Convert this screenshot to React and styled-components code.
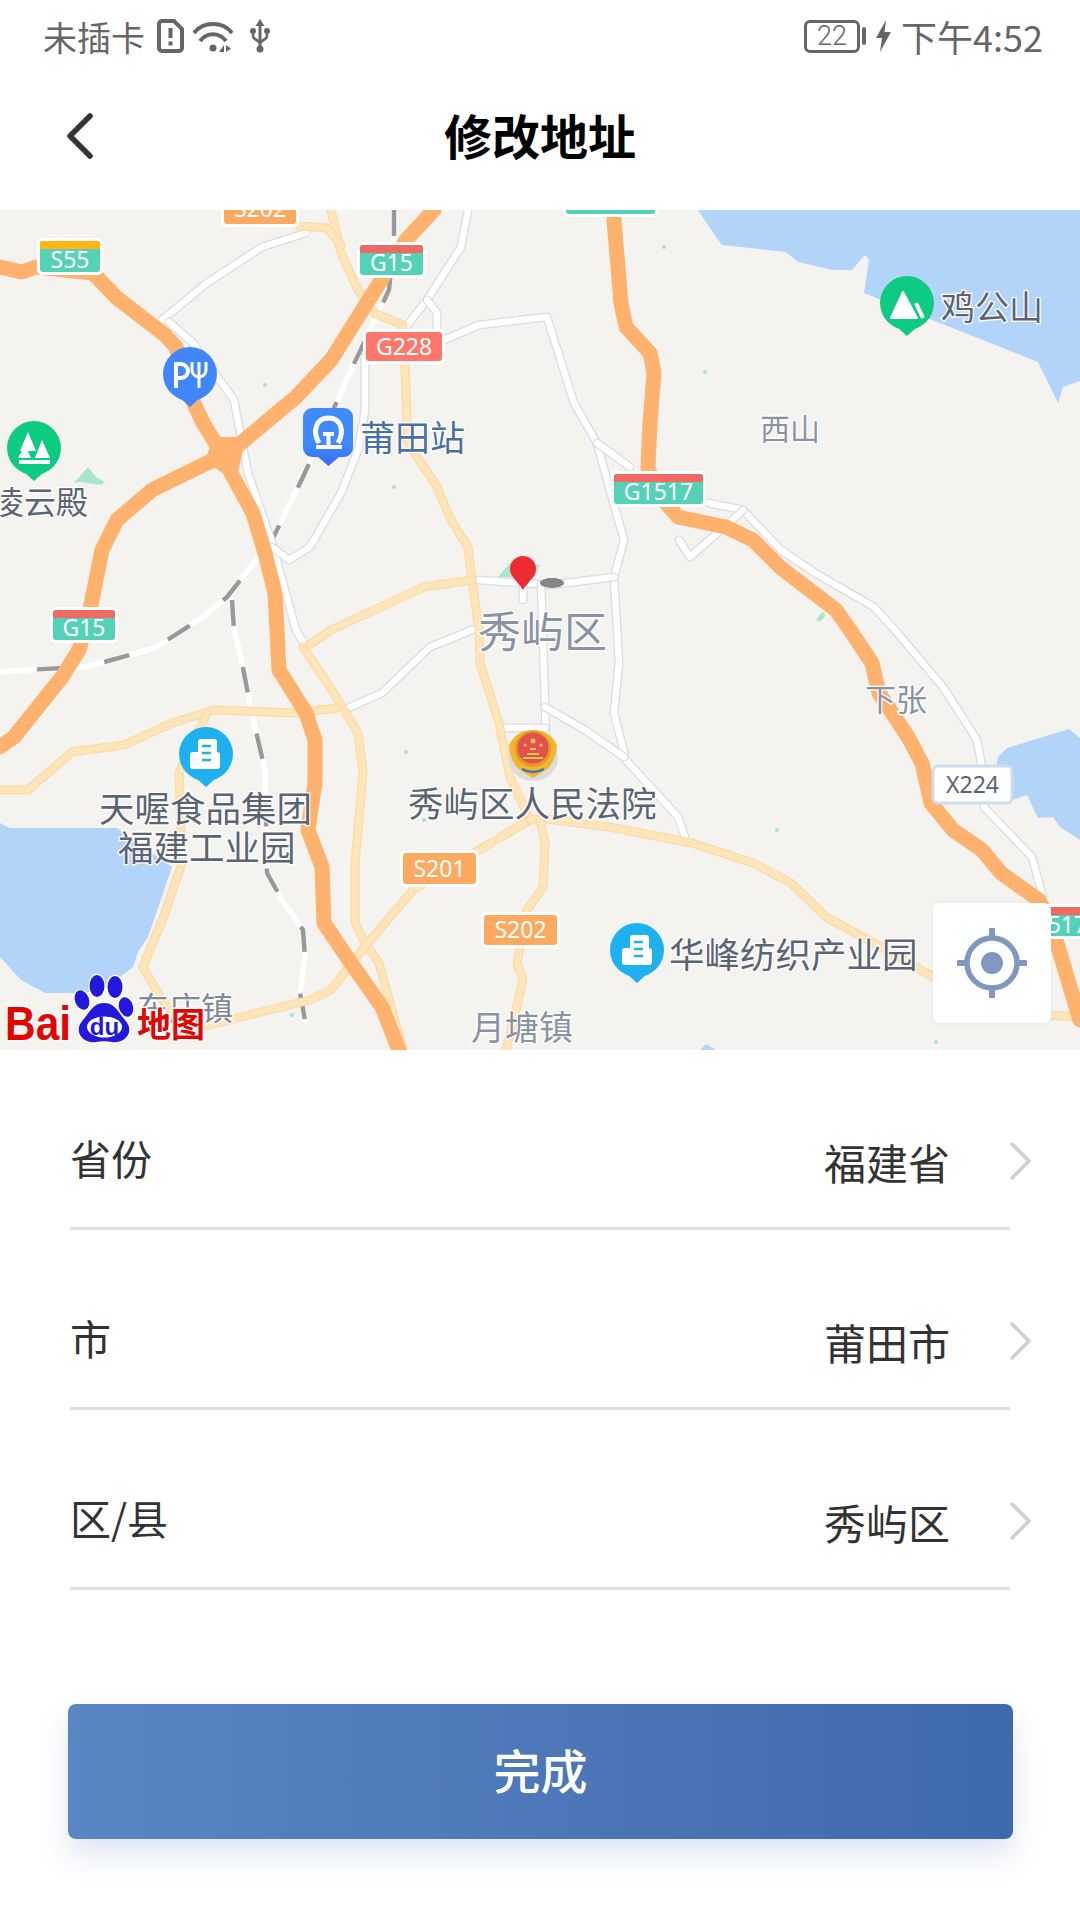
import React from 'react'
import styled, { createGlobalStyle } from 'styled-components'

const CJK = `"Noto Sans CJK SC", "Noto Sans", sans-serif`

const ORANGE_ROADS = [
  '0,267 22,272 36,267 93,273 117,298 165,335 176,347 191,397 203,423 220,450 224,456',
  '224,456 241,443 296,397 331,360 375,290 406,240 434,210',
  '224,456 207,463 152,490 117,520 102,550 90,610 79,650 62,677 14,737 0,747',
  '224,456 231,473 253,513 265,553 275,593 277,630 279,670 306,713 315,740 315,783 308,830 322,867 324,923 351,963 382,1007 399,1050',
  '614,210 614,220 621,303 626,327 650,353 654,373 650,423 648,467 655,490 678,517 726,527 753,540 781,568 836,610 850,630 872,663 879,693 908,737 922,763 931,803 953,830 982,850 1001,873 1039,900 1053,930 1080,1020',
]

const YELLOW_ROADS = [
  '331,210 341,253 358,290 374,313 403,325 405,367 408,443 437,487 451,520 468,547 472,580 479,630 480,663 499,723 510,777 530,820',
  '300,226 327,228 341,245',
  '472,580 424,587 331,630 306,647',
  '303,647 330,687 358,733 363,773 355,863 355,923 365,943 379,963 403,1050',
  '0,790 28,790 72,752 124,745 172,723 214,710 296,713 337,708',
  '207,713 179,773 182,863 165,913 143,967 162,1000 190,1030 241,1017 310,1000 331,990 362,950 413,890 479,850 530,820',
  '530,820 540,818 609,827 692,843 753,863 791,883 826,917 881,947 933,977',
  '1045,1015 1080,1017',
  '540,820 545,843 543,887 527,910 517,963 523,980 513,1023 506,1050',
]

const MINOR_ROADS = [
  '162,320 207,283 262,247 306,233',
  '169,322 193,343 234,400 241,437 248,473 272,543 296,630 306,647',
  '272,547 289,560 310,547 341,493 358,450 365,410 365,357 406,327 427,300 461,247 468,210',
  '427,300 437,313 437,330',
  '444,340 479,325 547,317 574,403 597,443 609,487 624,540 614,577 619,663 614,713 626,760 678,817 686,840',
  '614,577 550,585 479,580',
  '597,443 630,467',
  '709,503 743,510 781,550 815,573 874,607 895,630 943,687 977,740 982,767 984,807 1032,857 1043,897',
  '743,510 730,522 690,557 679,540',
  '541,585 543,640 545,707 547,770',
  '523,580 523,600',
  '545,707 585,730 624,757',
  '348,708 382,693 430,647 472,630',
  '504,728 545,728',
]

const RAILWAYS = [
  '394,210 394,240 389,290 351,370 303,477 272,540 227,597 203,617 155,648 86,667 24,670 0,672',
  '232,600 234,630 241,657 251,710 265,770 267,873 282,900 303,930 305,957 300,993 305,1020',
]

const WATER = [
  '698,210 716,237 722,245 786,252 798,262 833,270 852,270 865,255 869,260 864,293 1038,362 1058,403 1063,387 1080,381 1080,210',
  '0,823 10,828 117,828 172,867 148,937 138,952 133,967 120,977 86,993 45,993 21,980 0,957',
  '998,757 1007,748 1069,729 1080,738 1080,840 1060,827 1053,817 1038,818 1027,795 1012,800 996,767',
  '700,1050 706,1044 716,1050',
]

const GREENERY = [
  '74,483 88,467 96,477 105,482 101,485 80,482',
  '498,577 510,563 520,562 540,565 535,577',
  '816,620 822,612 826,615 820,622',
]

const DOTS = [
  [265, 385], [394, 487], [664, 247], [705, 372], [406, 752], [424, 820], [292, 1015], [777, 830], [936, 1042],
]

const SHIELDS = [
  { x: 38, y: 239, w: 64, h: 35, band: '#ffb514', body: '#54d2b8', label: 'S55' },
  { x: 358, y: 243, w: 67, h: 34, band: '#ef6a62', body: '#54d2b8', label: 'G15' },
  { x: 51, y: 608, w: 66, h: 34, band: '#ef6a62', body: '#54d2b8', label: 'G15' },
  { x: 612, y: 472, w: 93, h: 34, band: '#ef6a62', body: '#54d2b8', label: 'G1517' },
  { x: 1006, y: 905, w: 93, h: 33, band: '#ef6a62', body: '#54d2b8', label: 'G1517' },
  { x: 564, y: 190, w: 93, h: 26, body: '#54d2b8' },
  { x: 222, y: 192, w: 76, h: 34, body: '#fdaa60', label: 'S202' },
  { x: 364, y: 330, w: 80, h: 33, body: '#ff766b', label: 'G228' },
  { x: 401, y: 851, w: 77, h: 35, body: '#fdaa60', label: 'S201' },
  { x: 482, y: 913, w: 77, h: 34, body: '#fdaa60', label: 'S202' },
]

const PLACES = [
  { x: 88, y: 503, size: 32, anchor: 'end', text: '凌云殿' },
  { x: 360, y: 438, size: 35, color: '#4a6fa5', text: '莆田站' },
  { x: 941, y: 308, size: 34, text: '鸡公山' },
  { x: 760, y: 430, size: 30, color: '#8a93a6', text: '西山' },
  { x: 478, y: 632, size: 43, color: '#8a92a5', text: '秀屿区' },
  { x: 865, y: 700, size: 31, color: '#8a93a6', text: '下张' },
  { x: 408, y: 804, size: 35.5, text: '秀屿区人民法院' },
  { x: 99, y: 809, size: 35.5, text: '天喔食品集团' },
  { x: 118, y: 848, size: 35.5, text: '福建工业园' },
  { x: 669, y: 955, size: 35.5, text: '华峰纺织产业园' },
  { x: 137, y: 1009, size: 32, color: '#7f8899', text: '东庄镇' },
  { x: 471, y: 1028, size: 34, color: '#8a93a6', text: '月塘镇' },
]

const FIELDS = [
  { label: '省份', value: '福建省' },
  { label: '市', value: '莆田市' },
  { label: '区/县', value: '秀屿区' },
]

const Road = ({ points, casing, fill, outer, inner }) => (
  <>
    <RoadLine points={points} stroke={casing} strokeWidth={outer} />
    <RoadLine points={points} stroke={fill} strokeWidth={inner} />
  </>
)

const Shield = ({ x, y, w, h, band, body, label }) => (
  <g>
    <rect x={x - 1} y={y - 1} width={w + 2} height={h + 2} rx="5" fill="#fff" />
    <rect x={x + 2} y={y + 2} width={w - 4} height={h - 4} rx="3" fill={body} />
    {band && <path d={`M${x + 2} ${y + 10} v-5 a3 3 0 0 1 3 -3 h${w - 10} a3 3 0 0 1 3 3 v5 z`} fill={band} />}
    {label && (
      <ShieldText x={x + w / 2} y={y + h / 2 + (band ? 2 : -1)}>
        {label}
      </ShieldText>
    )}
  </g>
)

const Pin = ({ cx, cy, color, children }) => (
  <g>
    <circle cx={cx} cy={cy} r="27" fill={color} />
    <path d={`M${cx - 10} ${cy + 24} L${cx} ${cy + 33} L${cx + 10} ${cy + 24} z`} fill={color} />
    {children}
  </g>
)

const Building = ({ x, y, color }) => (
  <g>
    <rect x={x + 8} y={y} width="19" height="20" rx="3" fill="#fff" />
    <rect x={x} y={y + 13} width="30" height="17" rx="3" fill="#fff" />
    <path d={`M${x + 12} ${y + 7} h9 M${x + 12} ${y + 14} h9 M${x + 12} ${y + 21} h9`} stroke={color} strokeWidth="2.5" />
  </g>
)

const MapDrawing = () => (
  <MapSvg viewBox="0 210 1080 840">
    <defs>
      <linearGradient id="stationBlue" x1="0" y1="0" x2="0" y2="1">
        <stop offset="0.6" stopColor="#3f8afc" />
        <stop offset="1" stopColor="#3a6cf0" />
      </linearGradient>
    </defs>
    <rect x="0" y="210" width="1080" height="840" fill="#f5f3f0" />
    {WATER.map(p => <polygon key={p} points={p} fill="#b3d4f9" />)}
    {GREENERY.map(p => <polygon key={p} points={p} fill="#abe5d0" />)}
    {DOTS.map(([x, y]) => <circle key={`${x}-${y}`} cx={x} cy={y} r="2" fill="#a5e0dc" />)}

    {RAILWAYS.map(p => (
      <g key={p}>
        <RoadLine points={p} stroke="#fff" strokeWidth="5.5" />
        <RailDash points={p} stroke="#999" strokeWidth="4.5" strokeDasharray="26 42" />
      </g>
    ))}
    {MINOR_ROADS.map(p => <Road key={p} points={p} casing="#d9dce5" fill="#fff" outer="9" inner="6.5" />)}
    {YELLOW_ROADS.map(p => <Road key={p} points={p} casing="#fdd9a6" fill="#ffe6ba" outer="9" inner="6.5" />)}
    {ORANGE_ROADS.map(p => <RoadLine key={p} points={p} stroke="#ffb26e" strokeWidth="15" />)}
    <polygon points="218,437 241,437 243,450 238,473 222,473 205,460 210,447" fill="#ffb26e" />

    {SHIELDS.map(s => <Shield key={`${s.x}-${s.y}`} {...s} />)}
    <rect x="933" y="766" width="79" height="37" rx="5" fill="#fff" stroke="#cfdcef" strokeWidth="3" />
    <ShieldText x={972.5} y={784} $dark>X224</ShieldText>

    <ellipse cx="552" cy="583" rx="12" ry="5" fill="#858585" />
    <path d="M523 590 C517 580 510 577 510 569 a13 13 0 0 1 26 0 C536 577 529 580 523 590 z" fill="#ee2b30" />

    <Pin cx={34} cy={448} color="#0dcb80">
      <path d="M28 432 L36 451 H20 z M42 440 L50 458 H35 z M25 445 L31 458 H18 z" fill="#fff" />
      <path d="M19 462 H50" stroke="#fff" strokeWidth="4" />
    </Pin>
    <Pin cx={190} cy={374} color="#4187fb">
      <path d="M176 388 V364 h5 a7 7 0 0 1 0 14 h-5" fill="none" stroke="#fff" strokeWidth="4" />
      <path d="M199 388 V362 M192 362 v8 a7 7 0 0 0 14 0 v-8" fill="none" stroke="#fff" strokeWidth="3" />
    </Pin>
    <Pin cx={907} cy={303} color="#0dcb80">
      <path d="M903 292 L917 318 H891 z" fill="#fff" stroke="#fff" strokeWidth="2" strokeLinejoin="round" />
      <path d="M916 303 L923 318" stroke="#fff" strokeWidth="4" />
    </Pin>
    <Pin cx={206} cy={754} color="#1fb0f0">
      <Building x={190} y={739} color="#1fb0f0" />
    </Pin>
    <Pin cx={637} cy={950} color="#1fb0f0">
      <Building x={622} y={935} color="#1fb0f0" />
    </Pin>

    <path d="M312 408 H344 a9 9 0 0 1 9 9 V448 a9 9 0 0 1 -9 9 H339 L328.5 466 L318 457 H312 a9 9 0 0 1 -9 -9 V417 a9 9 0 0 1 9 -9 z" fill="url(#stationBlue)" />
    <path d="M319 443 C312 431 316 418 328.5 418 C341 418 345 431 338 443" fill="none" stroke="#fff" strokeWidth="5" />
    <path d="M323 434 H334 M328.5 434 V447 M316 447 H342" fill="none" stroke="#fff" strokeWidth="4" />

    <ellipse cx="533" cy="757" rx="25" ry="24" fill="#dcdcdc" />
    <path d="M533 730 C546 730 552 736 557 745 C556 756 553 764 546 770 L533 778 L520 770 C513 764 510 756 509 745 C514 736 520 730 533 730 z" fill="#f2b52e" />
    <circle cx="533" cy="749" r="18" fill="#e39a22" />
    <circle cx="533" cy="748" r="15.5" fill="#e2514d" />
    <path d="M523 758 H543 M527 754 H539 M530 749 H536" stroke="#f5c84c" strokeWidth="2" />
    <g fill="#f5c84c">
      <circle cx="533" cy="741" r="2.5" />
      <circle cx="525" cy="745" r="1.5" />
      <circle cx="541" cy="745" r="1.5" />
    </g>
    <path d="M522 769 Q533 775 544 769" fill="none" stroke="#4272b8" strokeWidth="2.5" />

    {PLACES.map(p => (
      <PlaceLabel key={p.text} x={p.x} y={p.y} dy="-3" textAnchor={p.anchor} $size={p.size} $color={p.color}>
        {p.text}
      </PlaceLabel>
    ))}

    <LogoText x="5" y="1040" fill="#e10600" textLength="66" lengthAdjust="spacingAndGlyphs" $size={48}>Bai</LogoText>
    <g fill="#2319dc" stroke="#fff" strokeWidth="2.5" paintOrder="stroke">
      <ellipse cx="97" cy="986" rx="7.5" ry="11" />
      <ellipse cx="115" cy="987" rx="7.5" ry="11" />
      <ellipse cx="82" cy="1000" rx="7" ry="10" transform="rotate(-20 82 1000)" />
      <ellipse cx="126" cy="1007" rx="7" ry="10" transform="rotate(-15 126 1007)" />
      <path d="M104 1003 C115 1003 118 1012 125 1020 C136 1032 124 1044 112 1042 C107 1041 101 1041 96 1042 C84 1044 72 1032 83 1020 C90 1012 93 1003 104 1003 z" />
    </g>
    <ellipse cx="104.5" cy="1027" rx="17.5" ry="10.5" fill="#fff" />
    <LogoText x="104.5" y="1035" fill="#2319dc" textAnchor="middle" $size={24} $plain>du</LogoText>
    <LogoText x="137" y="1037" fill="#e10600" $size={34}>地图</LogoText>
  </MapSvg>
)

const App = () => (
  <Page>
    <GlobalStyle />
    <StatusBar>
      <StatusGroup>
        <Carrier>未插卡</Carrier>
        <svg width="27" height="34" viewBox="0 0 27 34" fill="none">
          <path d="M5 2 H17 L25 10 V29 a3 3 0 0 1 -3 3 H5 a3 3 0 0 1 -3 -3 V5 a3 3 0 0 1 3 -3 z" stroke="#666" strokeWidth="4" />
          <path d="M13.5 9 V19 M13.5 22.5 V26.5" stroke="#666" strokeWidth="4" />
        </svg>
        <svg width="40" height="33" viewBox="0 0 40 33" fill="none" stroke="#666" strokeWidth="4">
          <path d="M1 13 C10 1 30 1 39 13" />
          <path d="M7 21 C14 12 26 12 33 21" />
          <circle cx="20" cy="28" r="3.5" fill="#666" stroke="none" />
          <path d="M26 32 L31 25 V32 z M33 25 L38 28.5 L33 32 z" fill="#666" stroke="none" />
        </svg>
        <UsbIcon width="20" height="34" viewBox="0 0 20 34" fill="none" stroke="#666" strokeWidth="3">
          <path d="M10 4 V31" />
          <path d="M10 0 L5.5 7 H14.5 z" fill="#666" stroke="none" />
          <path d="M3 13 V17 C3 21 10 21 10 25 C10 21 17 21 17 17 V13" strokeWidth="2.6" />
          <circle cx="3" cy="12" r="3" fill="#666" stroke="none" />
          <circle cx="17" cy="12" r="3" fill="#666" stroke="none" />
          <circle cx="10" cy="30" r="3.5" fill="#666" stroke="none" />
        </UsbIcon>
      </StatusGroup>
      <StatusGroup>
        <BatteryBody>22</BatteryBody>
        <BatteryCap />
        <svg width="17" height="32" viewBox="0 0 17 32">
          <path d="M11 0 L1 18 H7 L5 32 L16 12 H9.5 z" fill="#666" />
        </svg>
        <Clock>下午4:52</Clock>
      </StatusGroup>
    </StatusBar>

    <NavBar>
      <BackIcon width="27" height="46" viewBox="0 0 27 46" fill="none">
        <path d="M24 3 L4 23 L24 43" stroke="#333" strokeWidth="5.5" strokeLinecap="round" strokeLinejoin="round" />
      </BackIcon>
      <Title>修改地址</Title>
    </NavBar>

    <MapView>
      <MapDrawing />
      <LocateButton>
        <svg width="70" height="70" viewBox="0 0 70 70" fill="none">
          <circle cx="35" cy="35" r="25" stroke="#7f98bf" strokeWidth="5.5" />
          <circle cx="35" cy="35" r="11" fill="#7f98bf" />
          <path d="M35 2 V8 M35 62 V68 M2 35 H8 M62 35 H68" stroke="#7f98bf" strokeWidth="6" strokeLinecap="round" />
        </svg>
      </LocateButton>
    </MapView>

    <Form>
      {FIELDS.map(f => (
        <Row key={f.label}>
          <RowLabel>{f.label}</RowLabel>
          <RowValue>{f.value}</RowValue>
          <Chevron width="22" height="40" viewBox="0 0 22 40" fill="none">
            <path d="M2 2 L20 20 L2 38" stroke="#cfcfcf" strokeWidth="3.5" />
          </Chevron>
        </Row>
      ))}
    </Form>

    <DoneButton>完成</DoneButton>
  </Page>
)

const GlobalStyle = createGlobalStyle`
  html, body {
    margin: 0;
    padding: 0;
    background: #fff;
  }
`

const Page = styled.div`
  width: 1080px;
  height: 1920px;
  overflow: hidden;
  background: #fff;
  font-family: ${CJK};
`

const StatusBar = styled.div`
  height: 76px;
  padding: 0 37px 4px 43px;
  box-sizing: border-box;
  display: flex;
  align-items: center;
  justify-content: space-between;
`

const StatusGroup = styled.div`
  display: flex;
  align-items: center;
  gap: 9px;
`

const Carrier = styled.span`
  font-size: 34px;
  color: #666;
  width: 105px;
  white-space: nowrap;
`

const UsbIcon = styled.svg`
  margin-left: 8px;
`

const BatteryBody = styled.div`
  width: 56px;
  height: 33px;
  box-sizing: border-box;
  border: 3px solid #666;
  border-radius: 6px;
  display: flex;
  align-items: center;
  justify-content: center;
  font-family: Roboto, sans-serif;
  font-weight: 300;
  font-size: 27px;
  color: #666;
`

const BatteryCap = styled.div`
  width: 4px;
  height: 18px;
  margin-left: -7px;
  background: #666;
  border-radius: 2px;
`

const Clock = styled.span`
  font-size: 36px;
  color: #666;
  white-space: nowrap;
`

const NavBar = styled.div`
  height: 134px;
  padding: 0 66px 14px;
  box-sizing: border-box;
  display: grid;
  grid-template-columns: 1fr auto 1fr;
  align-items: center;
`

const BackIcon = styled.svg`
  display: block;
`

const Title = styled.h1`
  margin: 0 0 4px;
  font-size: 48px;
  font-weight: 700;
  color: #000;
  line-height: 1;
`

const MapView = styled.div`
  position: relative;
  height: 840px;
  overflow: hidden;
`

const MapSvg = styled.svg`
  display: block;
  width: 1080px;
  height: 840px;
`

const RoadLine = styled.polyline`
  fill: none;
  stroke-linejoin: round;
  stroke-linecap: round;
`

const RailDash = styled.polyline`
  fill: none;
  stroke-linejoin: round;
`

const ShieldText = styled.text`
  font-family: "Noto Sans", sans-serif;
  font-size: 23px;
  fill: ${p => (p.$dark ? '#5a6478' : '#fff')};
  text-anchor: middle;
  dominant-baseline: central;
`

const PlaceLabel = styled.text`
  font-family: ${CJK};
  font-size: ${p => p.$size}px;
  fill: ${p => p.$color || '#5b6474'};
  stroke: #fff;
  stroke-width: 2.5px;
  paint-order: stroke;
  dominant-baseline: central;
`

const LogoText = styled.text`
  font-family: "Liberation Sans", ${CJK};
  font-weight: 700;
  font-size: ${p => p.$size}px;
  stroke: ${p => (p.$plain ? 'none' : '#fff')};
  stroke-width: 3px;
  paint-order: stroke;
`

const LocateButton = styled.div`
  position: absolute;
  left: 933px;
  top: 693px;
  width: 118px;
  height: 120px;
  display: flex;
  align-items: center;
  justify-content: center;
  background: #fff;
  border-radius: 7px;
  box-shadow: 0 0 6px rgba(0, 0, 0, 0.05);
`

const Form = styled.div`
  margin: 0 70px;
  display: flex;
  flex-direction: column;
`

const Row = styled.div`
  height: 180px;
  box-sizing: border-box;
  border-bottom: 3px solid #dfdfdf;
  display: flex;
  align-items: flex-start;
`

const RowLabel = styled.span`
  flex: 1;
  margin-top: 82px;
  font-size: 41px;
  line-height: 50px;
  color: #333;
`

const RowValue = styled.span`
  margin-top: 87px;
  font-size: 42px;
  line-height: 50px;
  color: #333;
`

const Chevron = styled.svg`
  margin: 91px -21px 0 59px;
  flex: none;
`

const DoneButton = styled.button`
  display: block;
  width: 945px;
  height: 135px;
  margin: 114px 0 0 68px;
  padding: 0 0 6px;
  border: 0;
  border-radius: 8px;
  background: linear-gradient(90deg, #5b86c4, #3f69ad);
  box-shadow: 0 16px 30px rgba(70, 110, 180, 0.18);
  font-family: ${CJK};
  font-size: 47px;
  font-weight: 500;
  color: #fff;
`

export default App
